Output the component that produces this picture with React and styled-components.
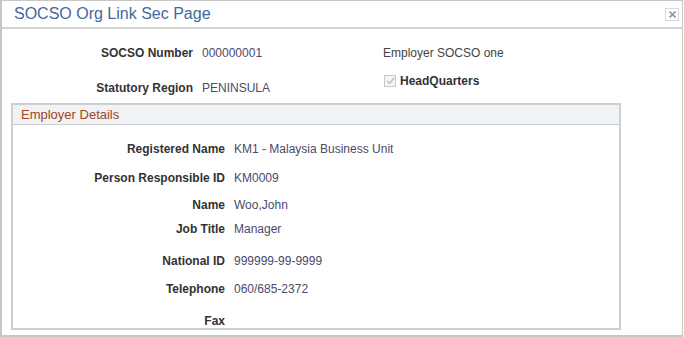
import styled, { createGlobalStyle } from "styled-components";

const GlobalStyle = createGlobalStyle`
  html, body {
    margin: 0;
    padding: 0;
    background: #ffffff;
  }
  body {
    font-family: Arial, "Liberation Sans", sans-serif;
  }
`;

const Frame = styled.div`
  box-sizing: border-box;
  width: 683px;
  height: 337px;
  border: 1px solid #c6c6c6;
  border-left-width: 2px;
  border-bottom-width: 2px;
  background: #fff;
  overflow: hidden;
`;

const Header = styled.div`
  height: 26px;
  border-bottom: 2px solid #d4d4d4;
  display: flex;
  align-items: center;
  justify-content: space-between;
  padding: 0 3px 0 12px;
`;

const Title = styled.h1`
  margin: 0;
  font-family: Arial, "Liberation Sans", sans-serif;
  font-weight: normal;
  font-size: 16px;
  color: #45679a;
`;

const CloseButton = styled.button`
  box-sizing: border-box;
  width: 14px;
  height: 13px;
  padding: 0;
  margin-top: 1px;
  border: 1px solid #d8d8d8;
  background: #fff;
  display: flex;
  align-items: center;
  justify-content: center;
  cursor: pointer;
`;

const TopGrid = styled.div`
  display: grid;
  grid-template-columns: 191px 170px 1fr;
  column-gap: 9px;
  padding-top: 16px;
  font-size: 12px;
  line-height: 16px;
`;

const Label = styled.div`
  text-align: right;
  font-weight: bold;
  color: #333;
  white-space: nowrap;
  align-self: ${(p) => p.$align || "start"};
`;

const Value = styled.div`
  color: #4b4a6a;
  white-space: nowrap;
  align-self: ${(p) => p.$align || "start"};
`;

const Note = styled.div`
  color: #444;
  padding-left: 2px;
`;

const CheckRow = styled.div`
  display: flex;
  align-items: center;
  align-self: start;
  gap: 4px;
  padding-left: 3px;
  margin-top: 12px;
  font-weight: bold;
  color: #333;
`;

const Check = styled.span`
  box-sizing: border-box;
  width: 12px;
  height: 12px;
  border: 1px solid #c9c9c1;
  background: #f4f4f0;
  display: flex;
  align-items: center;
  justify-content: center;
`;

const SecondRow = styled.div`
  grid-column: 1 / -1;
  display: grid;
  grid-template-columns: 191px 170px 1fr;
  column-gap: 9px;
  height: 35px;
`;

const Group = styled.section`
  box-sizing: border-box;
  margin: 7px 0 0 9px;
  width: 610px;
  height: 227px;
  border: 2px solid #cbd0d5;
  border-top: none;
`;

const GroupHeader = styled.div`
  height: 19px;
  margin: 0 -2px;
  border: 2px solid #cbd0d5;
  border-bottom-width: 1px;
  background: #f0f2f4;
  display: flex;
  align-items: center;
  padding-left: 8px;
  font-size: 13px;
  color: #a0441f;
`;

const Row = styled.div`
  display: grid;
  grid-template-columns: 212px 1fr;
  column-gap: 9px;
  margin-top: ${(p) => p.$gap}px;
  font-size: 12px;
  line-height: 16px;
`;

const details = [
  { label: "Registered Name", value: "KM1 - Malaysia Business Unit", gap: 16 },
  { label: "Person Responsible ID", value: "KM0009", gap: 13 },
  { label: "Name", value: "Woo,John", gap: 11 },
  { label: "Job Title", value: "Manager", gap: 8 },
  { label: "National ID", value: "999999-99-9999", gap: 16 },
  { label: "Telephone", value: "060/685-2372", gap: 12 },
  { label: "Fax", value: "", gap: 16 },
];

const App = () => (
  <>
    <GlobalStyle />
    <Frame>
      <Header>
        <Title>SOCSO Org Link Sec Page</Title>
        <CloseButton aria-label="Close">
          <svg width="7" height="7" viewBox="0 0 7 7">
            <path d="M0.5 0.5 L6.5 6.5 M6.5 0.5 L0.5 6.5" stroke="#8a9aaa" strokeWidth="1.6" />
          </svg>
        </CloseButton>
      </Header>
      <TopGrid>
        <Label>SOCSO Number</Label>
        <Value>000000001</Value>
        <Note>Employer SOCSO one</Note>
        <SecondRow>
          <Label $align="end">Statutory Region</Label>
          <Value $align="end">PENINSULA</Value>
          <CheckRow>
            <Check>
              <svg width="9" height="8" viewBox="0 0 9 8">
                <path d="M1 4 L3.5 6.5 L8 1" fill="none" stroke="#b9c2b9" strokeWidth="1.5" />
              </svg>
            </Check>
            HeadQuarters
          </CheckRow>
        </SecondRow>
      </TopGrid>
      <Group>
        <GroupHeader>Employer Details</GroupHeader>
        {details.map((d) => (
          <Row key={d.label} $gap={d.gap}>
            <Label>{d.label}</Label>
            <Value>{d.value}</Value>
          </Row>
        ))}
      </Group>
    </Frame>
  </>
);

export default App;
